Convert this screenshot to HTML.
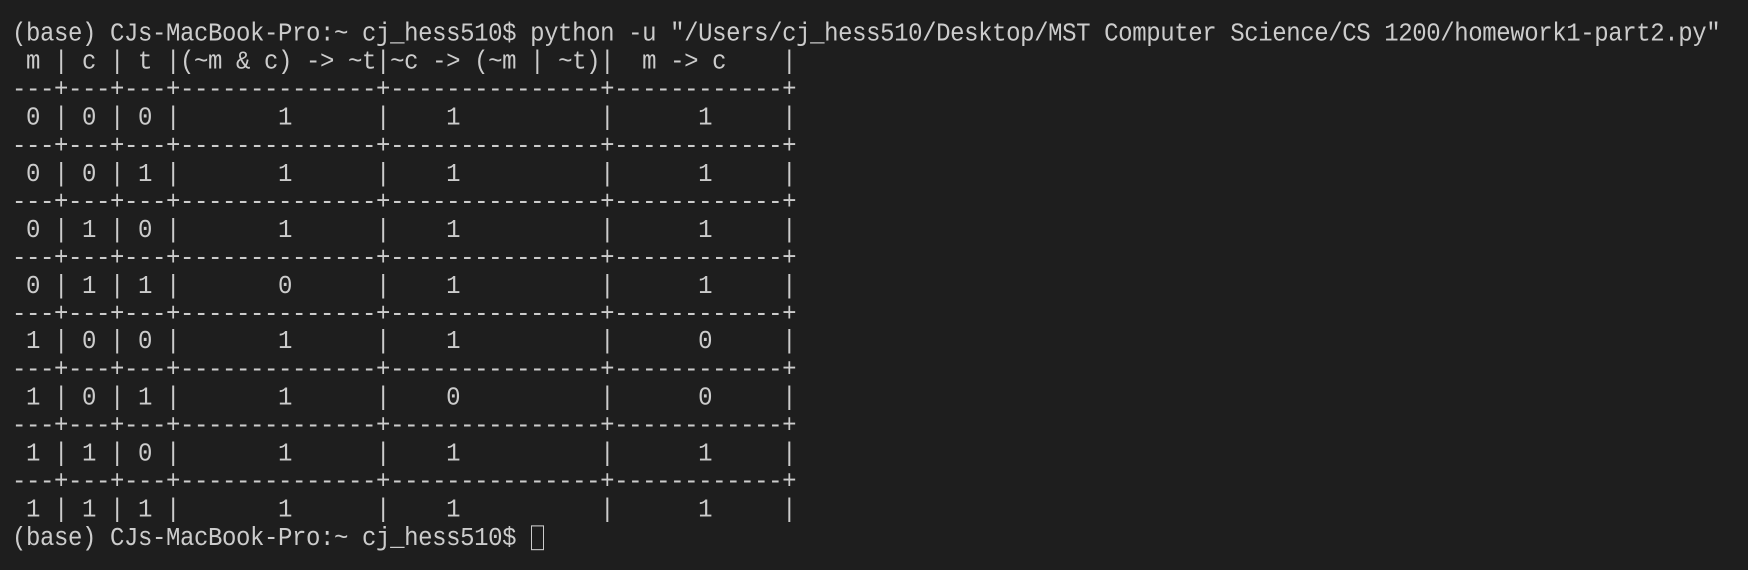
<!DOCTYPE html>
<html><head><meta charset="utf-8"><style>
html,body{margin:0;padding:0;background:#1e1e1e;width:1748px;height:570px;overflow:hidden}
pre{margin:0;position:absolute;left:12px;top:21px;font-family:"Liberation Mono","DejaVu Sans Mono",monospace;font-size:24px;letter-spacing:-0.4px;line-height:25.95px;color:#cccccc;transform:scaleY(1.08);transform-origin:0 0}
.cur{display:inline-block;width:13px;height:23px;border:1px solid #cccccc;box-sizing:border-box;vertical-align:-5px;margin-left:1px}
</style></head><body>
<pre>(base) CJs-MacBook-Pro:~ cj_hess510$ python -u "/Users/cj_hess510/Desktop/MST Computer Science/CS 1200/homework1-part2.py"
 m | c | t |(~m &amp; c) -&gt; ~t|~c -&gt; (~m | ~t)|  m -&gt; c    |
---+---+---+--------------+---------------+------------+
 0 | 0 | 0 |       1      |    1          |      1     |
---+---+---+--------------+---------------+------------+
 0 | 0 | 1 |       1      |    1          |      1     |
---+---+---+--------------+---------------+------------+
 0 | 1 | 0 |       1      |    1          |      1     |
---+---+---+--------------+---------------+------------+
 0 | 1 | 1 |       0      |    1          |      1     |
---+---+---+--------------+---------------+------------+
 1 | 0 | 0 |       1      |    1          |      0     |
---+---+---+--------------+---------------+------------+
 1 | 0 | 1 |       1      |    0          |      0     |
---+---+---+--------------+---------------+------------+
 1 | 1 | 0 |       1      |    1          |      1     |
---+---+---+--------------+---------------+------------+
 1 | 1 | 1 |       1      |    1          |      1     |
(base) CJs-MacBook-Pro:~ cj_hess510$ <span class="cur"></span></pre>
</body></html>
